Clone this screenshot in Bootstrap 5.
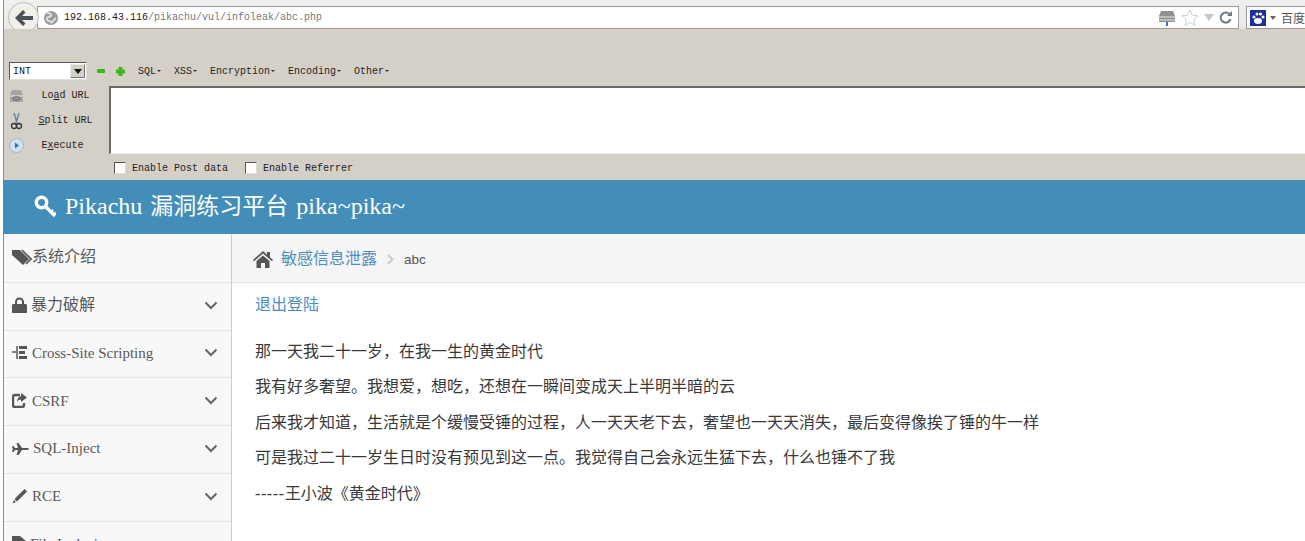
<!DOCTYPE html>
<html lang="zh-CN">
<head>
    <meta charset="UTF-8">
    <title>Pikachu 漏洞练习平台</title>
    <meta name="viewport" content="width=device-width, initial-scale=1">
    <link href="https://cdn.jsdelivr.net/npm/bootstrap@5.3.3/dist/css/bootstrap.min.css" rel="stylesheet">
    <style>
        html, body { height: 100%; overflow: hidden; }
        body {
            background: #fff;
            color: #393939;
            font-family: "Liberation Serif", "Noto Sans CJK SC", serif;
            font-size: 16px;
        }

        /* browser chrome */
        .browser-bar {
            height: 29px;
            padding: 6px 0 0 33px;
            background: linear-gradient(#f1f0ee, #e9e8e4);
            border-left: 1px solid #8c8c8c;
            margin-left: 3px;
            position: relative;
            overflow: hidden;
        }
        .back-btn {
            position: absolute;
            left: 4px;
            top: 2px;
            width: 31px;
            height: 31px;
            border-radius: 50%;
            background: #f1f0ea;
            border: 1px solid #bdbdb5;
            z-index: 2;
        }
        .url-field, .search-field {
            height: 23px;
            flex: none;
            background: #fff;
            border: 1px solid #9a9a9a;
            font: 10px "Liberation Mono", monospace;
        }
        .url-field { width: 1202px; padding: 0 6px 0 5px; }
        .search-field { width: 64px; margin-left: 7px; padding-left: 3px; font: 12px "Noto Sans CJK SC", sans-serif; color: #555; white-space: nowrap; }
        .url-host { color: #222; }
        .url-path { color: #777; }
        .url-globe { margin-right: 5px; flex: none; }
        .url-tools { gap: 5px; }
        .search-name { margin-left: 5px; }

        /* hackbar */
        .hack-panel {
            height: 151px;
            background: #d4d0c8;
            margin-left: 3px;
            border-left: 1px solid #8c8c8c;
            font: 10px "Liberation Mono", monospace;
            color: #222;
        }
        .hack-menu { height: 57px; padding: 33px 0 6px 5px; }
        .int-select {
            width: 78px;
            height: 18px;
            background: #fff;
            border: 1px solid #555;
            border-right-color: #ddd;
            border-bottom-color: #ddd;
            padding-left: 3px;
            line-height: 18px;
        }
        .int-arrow {
            width: 15px;
            height: 14px;
            margin: 1px 1px 0 0;
            background: #d4d0c8;
            border: 1px solid #777;
            border-top-color: #eee;
            border-left-color: #eee;
        }
        .menu-entry { margin-left: 13px; }
        .menu-entry::after {
            content: "";
            display: inline-block;
            width: 0;
            height: 0;
            margin-left: 1px;
            vertical-align: 2px;
            border-left: 2px solid transparent;
            border-right: 2px solid transparent;
            border-top: 2px solid #333;
        }
        .hack-side { width: 105px; height: 68px; margin-top: -3px; padding-left: 5px; }
        .hack-btn { height: 25px; flex: none; }
        .btn-label { width: 78px; padding-left: 5px; text-align: center; }
        .exec-label { padding-right: 6px; }
        .hack-input {
            height: 68px;
            background: #fff;
            border-top: 2px solid #6a6a6a;
            border-left: 2px solid #6a6a6a;
            border-bottom: 1px solid #eee;
        }
        .hack-opts { height: 26px; padding: 2px 0 0 110px; }
        .fake-check {
            width: 12px;
            height: 12px;
            background: #fff;
            border: 1px solid #555;
            border-right-color: #ddd;
            border-bottom-color: #ddd;
        }
        .opt-text { margin-left: 6px; }
        .opt-second { margin-left: 17px; }

        /* site */
        .site-head {
            height: 54px;
            background: #438eb9;
            color: #fff;
            font-size: 24px;
            padding: 0 0 2px 31px;
            margin-left: 3px;
        }
        .head-cjk { font-size: 23px; margin: 0 2px; }
        .site-body { height: 307px; margin-left: 3px; border-left: 1px solid #8c8c8c; overflow: hidden; }
        .side-menu { width: 228px; flex: none; padding-top: 1px; background: #f8f8f8; border-right: 1px solid #ccc; }
        .side-item {
            height: 47.8px;
            padding: 0 13px 2px 8px;
            color: #585858;
            background: #f8f8f8;
            border-bottom: 1px solid #e5e5e5;
            font-size: 16px;
            white-space: nowrap;
        }
        .side-latin { font-size: 15px; }
        .main-pane { min-width: 0; }
        .crumb-bar {
            height: 49px;
            padding-top: 2px;
            background: #f5f5f5;
            border-bottom: 1px solid #e5e5e5;
            padding-left: 21px;
        }
        .crumb-link { color: #4c8fbd; text-decoration: none; }
        .crumb-sep { margin: 0 10px; }
        .crumb-now { font: 13.5px "Liberation Sans", sans-serif; color: #555; }
        .main-text { padding: 10px 0 0 23px; }
        .logout-link { color: #4c8fbd; text-decoration: none; display: block; line-height: 24px; margin-bottom: 17px; }
        .main-text p { margin: 0; line-height: 35.4px; white-space: nowrap; }
        .dash-run { letter-spacing: .6px; }
    </style>
</head>

<body>

    <!-- address bar -->
    <div class="browser-bar d-flex">
        <div class="back-btn d-flex align-items-center justify-content-center">
            <svg width="20" height="18" viewBox="0 0 20 18"><path d="M9 1 1 9l8 8 2.500-2.500L8 11h11V7H8l3.500-3.500z" fill="#4a525c"/></svg>
        </div>
        <div class="url-field d-flex align-items-center">
            <svg class="url-globe" width="16" height="16" viewBox="0 0 16 16"><circle cx="8" cy="8" r="7" fill="#9b9b9b"/><path d="M4 3c3 0 5 1 4 3S4 6 4 9s3 1 4 3 3-3 5-4" fill="none" stroke="#ddd" stroke-width="2"/></svg>
            <span><span class="url-host">192.168.43.116</span><span class="url-path">/pikachu/vul/infoleak/abc.php</span></span>
            <div class="url-tools ms-auto d-flex align-items-center">
                <svg width="18" height="16" viewBox="0 0 18 16"><path d="M3 1h12l2 5v6H1V6z" fill="#8f938f"/><path d="M1 7h16M1 10h16" stroke="#e6e6e6"/><path d="M9 12v4" stroke="#3d6fb4" stroke-width="2"/></svg>
                <svg width="18" height="17" viewBox="0 0 18 17"><path d="m9 1 2.400 5.200 5.600.6-4.200 3.800 1.200 5.600L9 13.400l-5 2.800 1.200-5.600L1 6.800l5.600-.6z" fill="#fff" stroke="#c9cfd2"/></svg>
                <svg width="10" height="7" viewBox="0 0 10 7"><path d="M0 0h10L5 7z" fill="#c3c8cb"/></svg>
                <svg width="13" height="13" viewBox="0 0 13 13"><path d="M11 4a5 5 0 1 0 .5 4" fill="none" stroke="#6d7a82" stroke-width="2"/><path d="M8 5h5V0z" fill="#6d7a82"/></svg>
            </div>
        </div>
        <div class="search-field d-flex align-items-center">
            <svg class="flex-none" width="16" height="16" viewBox="0 0 16 16"><rect width="16" height="16" fill="#1d2f9e"/><ellipse cx="8" cy="11" rx="4" ry="3" fill="#fff"/><circle cx="4" cy="7" r="1.500" fill="#fff"/><circle cx="7" cy="4" r="1.500" fill="#fff"/><circle cx="10.500" cy="4" r="1.500" fill="#fff"/><circle cx="13" cy="7" r="1.500" fill="#fff"/></svg>
            <svg class="ms-1" width="6" height="4" viewBox="0 0 6 4"><path d="M0 0h6L3 4z" fill="#666"/></svg>
            <span class="search-name">百度</span>
        </div>
    </div>

    <!-- hackbar -->
    <div class="hack-panel">
        <div class="hack-menu d-flex align-items-center">
            <div class="int-select d-flex justify-content-between">
                <span>INT</span>
                <span class="int-arrow d-flex align-items-center justify-content-center">
                    <svg width="8" height="5" viewBox="0 0 8 5"><path d="M0 0h8L4 5z" fill="#111"/></svg>
                </span>
            </div>
            <svg class="ms-2" width="12" height="12" viewBox="0 0 12 12"><rect x="2" y="4" width="8" height="4" rx="1" fill="#3cb521"/></svg>
            <svg class="ms-2" width="11" height="11" viewBox="0 0 11 11"><path d="M3.500 1h4v2.500H10v4H7.500V10h-4V7.500H1v-4h2.500z" fill="#3cb521"/></svg>
            <span class="menu-entry ms-2 ps-1">SQL</span>
            <span class="menu-entry">XSS</span>
            <span class="menu-entry">Encryption</span>
            <span class="menu-entry">Encoding</span>
            <span class="menu-entry">Other</span>
        </div>
        <div class="d-flex">
            <div class="hack-side">
                <div class="hack-btn d-flex align-items-center">
                    <svg width="15" height="14" viewBox="0 0 15 14"><path d="M3 1h9l2 5v7H1V6z" fill="#a5a5a2"/><path d="M1 7h13" stroke="#eee"/><rect x="4" y="8" width="7" height="3" rx="1.500" fill="none" stroke="#555"/></svg>
                    <span class="btn-label">Lo<u>a</u>d URL</span>
                </div>
                <div class="hack-btn d-flex align-items-center">
                    <svg width="15" height="18" viewBox="0 0 15 18"><path d="M5 1l3 10M10 1 7 11" stroke="#6a87a8" stroke-width="1.500" fill="none"/><circle cx="5" cy="14" r="2.500" fill="none" stroke="#333" stroke-width="1.300"/><circle cx="10" cy="14" r="2.500" fill="none" stroke="#333" stroke-width="1.300"/></svg>
                    <span class="btn-label"><u>S</u>plit URL</span>
                </div>
                <div class="hack-btn d-flex align-items-center">
                    <svg width="15" height="15" viewBox="0 0 15 15"><circle cx="7.500" cy="7.500" r="7" fill="#cfe0f2" stroke="#9db8d6"/><path d="M6 4.500 10 7.500 6 10.500z" fill="#3a6cb0"/></svg>
                    <span class="btn-label exec-label">E<u>x</u>ecute</span>
                </div>
            </div>
            <div class="hack-input flex-grow-1"></div>
        </div>
        <div class="hack-opts d-flex align-items-center">
            <span class="fake-check"></span><span class="opt-text">Enable Post data</span>
            <span class="fake-check opt-second"></span><span class="opt-text">Enable Referrer</span>
        </div>
    </div>

    <!-- site header -->
    <div class="site-head d-flex align-items-center">
        <svg class="me-2" width="23" height="23" viewBox="0 0 23 23" fill="none" stroke="#fff"><circle cx="7.500" cy="7.500" r="5.200" stroke-width="3.400"/><path d="M11.500 11.500 21 21" stroke-width="3.200"/><path d="M16.500 17.500l2.500-2.500M19 20l2.500-2.500" stroke-width="2.400"/></svg>
        <span>Pikachu <span class="head-cjk">漏洞练习平台</span> pika~pika~</span>
    </div>

    <div class="site-body d-flex">
        <!-- side menu -->
        <div class="side-menu">
            <div class="side-item d-flex align-items-center">
                <svg width="20" height="16" viewBox="0 0 20 16"><path d="M0 1h8l9 9-6 6-11-10z" fill="#555"/><path d="M10 1l9 9-5 5" fill="none" stroke="#555" stroke-width="1.600"/></svg>
                <span>系统介绍</span>
            </div>
            <div class="side-item d-flex align-items-center">
                <svg class="me-1" width="15" height="16" viewBox="0 0 15 16"><path d="M3 7V5a4.500 4.500 0 0 1 9 0v2h1.500c.8 0 1.500.7 1.500 1.500V15c0 .6-.4 1-1 1H1c-.6 0-1-.4-1-1V8.500C0 7.700.7 7 1.500 7zM5 7h5V5a2.500 2.500 0 0 0-5 0z" fill="#555" fill-rule="evenodd"/></svg>
                <span>暴力破解</span>
                <svg class="ms-auto" width="14" height="9" viewBox="0 0 14 9"><path d="M1.500 1.500 7 7l5.500-5.500" fill="none" stroke="#666" stroke-width="2"/></svg>
            </div>
            <div class="side-item d-flex align-items-center">
                <svg class="me-1" width="16" height="15" viewBox="0 0 16 15"><path d="M0 7h4M5 1v13" stroke="#555" stroke-width="1.500"/><path d="M7 1h8v3H7zM7 6h6v3H7zM7 11h8v3H7z" fill="#555"/></svg>
                <span class="side-latin">Cross-Site Scripting</span>
                <svg class="ms-auto" width="14" height="9" viewBox="0 0 14 9"><path d="M1.500 1.500 7 7l5.500-5.500" fill="none" stroke="#666" stroke-width="2"/></svg>
            </div>
            <div class="side-item d-flex align-items-center">
                <svg class="me-1" width="16" height="15" viewBox="0 0 16 15"><path d="M8 2H3a2 2 0 0 0-2 2v8a2 2 0 0 0 2 2h7a2 2 0 0 0 2-2v-2" fill="none" stroke="#555" stroke-width="2.400"/><path d="M9 0l6 4.500L9 9V6.500C7 6.500 5.500 7.500 5 9.500 5 6 6.500 3.500 9 3z" fill="#555"/></svg>
                <span class="side-latin">CSRF</span>
                <svg class="ms-auto" width="14" height="9" viewBox="0 0 14 9"><path d="M1.500 1.500 7 7l5.500-5.500" fill="none" stroke="#666" stroke-width="2"/></svg>
            </div>
            <div class="side-item d-flex align-items-center">
                <svg class="me-1" width="17" height="12" viewBox="0 0 17 12"><path d="M0 3h1.500l1.500 2H6L4.500 0h2L10 5h5c2.500 0 2.500 2 0 2h-5l-3.500 5h-2L6 7H3L1.500 9H0l.8-3z" fill="#555"/></svg>
                <span class="side-latin">SQL-Inject</span>
                <svg class="ms-auto" width="14" height="9" viewBox="0 0 14 9"><path d="M1.500 1.500 7 7l5.500-5.500" fill="none" stroke="#666" stroke-width="2"/></svg>
            </div>
            <div class="side-item d-flex align-items-center">
                <svg class="me-1" width="16" height="16" viewBox="0 0 16 16"><path d="M12.500 1 15 3.500 5 13.500 2.500 11zM2 12l2 2-3.500 1.500z" fill="#555"/></svg>
                <span class="side-latin">RCE</span>
                <svg class="ms-auto" width="14" height="9" viewBox="0 0 14 9"><path d="M1.500 1.500 7 7l5.500-5.500" fill="none" stroke="#666" stroke-width="2"/></svg>
            </div>
            <div class="side-item d-flex align-items-center">
                <svg class="me-1" width="14" height="16" viewBox="0 0 14 16"><path d="M0 0h8l6 5v11H0z" fill="#555"/></svg>
                <span class="side-latin">File Inclusion</span>
            </div>
        </div>

        <!-- main -->
        <div class="main-pane flex-grow-1">
            <div class="crumb-bar d-flex align-items-center">
                <svg class="me-2" width="20" height="17" viewBox="0 0 20 17"><path d="M10 0 0 9l1 1.200L10 2.500l9 7.700L20 9l-3-2.700V1h-3v2.700zM3.500 10 10 4.500l6.500 5.500v7H12v-5H8v5H3.500z" fill="#555"/></svg>
                <a class="crumb-link" href="#">敏感信息泄露</a>
                <svg class="crumb-sep" width="7" height="11" viewBox="0 0 7 11"><path d="M1 1l4.500 4.500L1 10" fill="none" stroke="#ccc" stroke-width="2"/></svg>
                <span class="crumb-now">abc</span>
            </div>
            <div class="main-text">
                <a class="logout-link" href="#">退出登陆</a>
                <p>那一天我二十一岁，在我一生的黄金时代</p>
                <p>我有好多奢望。我想爱，想吃，还想在一瞬间变成天上半明半暗的云</p>
                <p>后来我才知道，生活就是个缓慢受锤的过程，人一天天老下去，奢望也一天天消失，最后变得像挨了锤的牛一样</p>
                <p>可是我过二十一岁生日时没有预见到这一点。我觉得自己会永远生猛下去，什么也锤不了我</p>
                <p><span class="dash-run">-----</span>王小波《黄金时代》</p>
            </div>
        </div>
    </div>

    <script src="https://cdn.jsdelivr.net/npm/bootstrap@5.3.3/dist/js/bootstrap.bundle.min.js"></script>
</body>
</html>
